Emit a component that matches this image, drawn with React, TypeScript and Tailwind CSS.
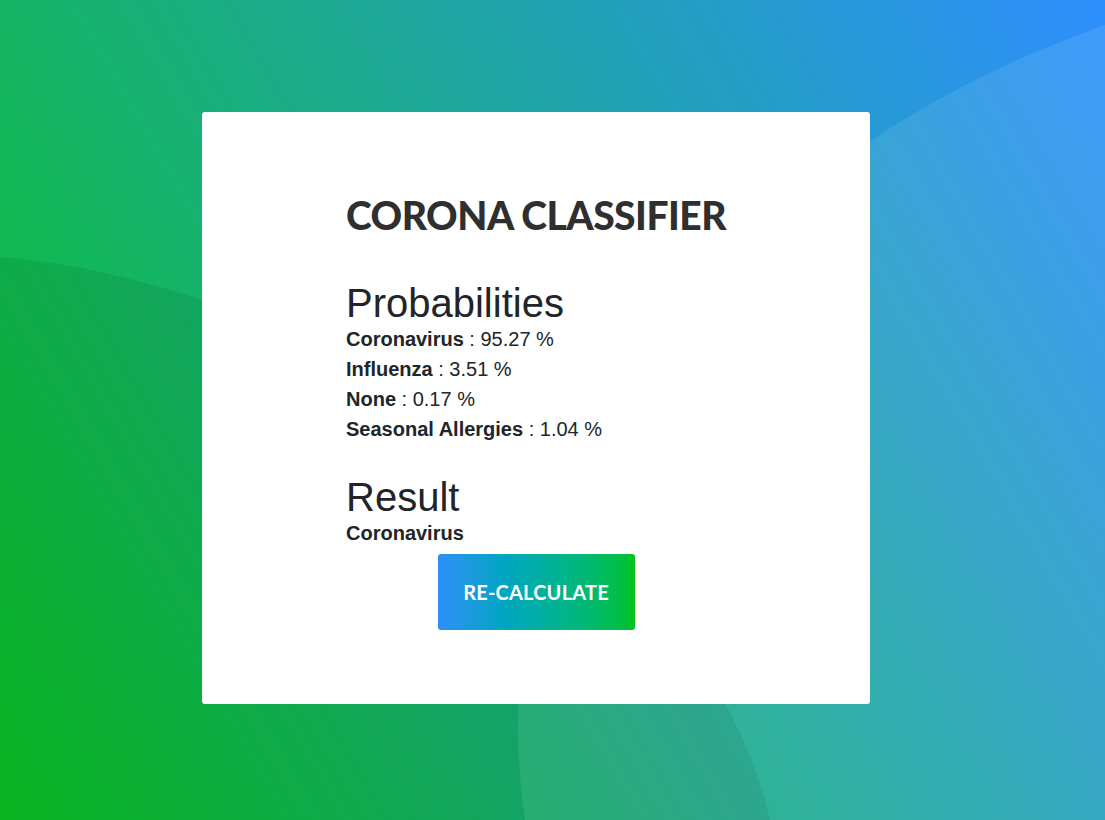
import React from "react";

const probabilities = [
  { label: "Coronavirus", value: "95.27" },
  { label: "Influenza", value: "3.51" },
  { label: "None", value: "0.17" },
  { label: "Seasonal Allergies", value: "1.04" },
];

function Backdrop() {
  return (
    <svg
      className="absolute inset-0 h-full w-full"
      viewBox="0 0 1105 820"
      preserveAspectRatio="none"
      aria-hidden="true"
    >
      {/* darker wave, bottom left */}
      <path d="M0 257 C300 280, 700 520, 770 820 L0 820 Z" fill="#000" fillOpacity="0.075" />
      {/* lighter wave, right side */}
      <path d="M1105 25 C750 150, 470 450, 525 820 L1105 820 Z" fill="#e6fff4" fillOpacity="0.1" />
    </svg>
  );
}

export default function App() {
  return (
    <div className="relative min-h-screen w-full overflow-hidden bg-[linear-gradient(60deg,#09c422,#2e8fff)] font-['Liberation_Sans',Arial,sans-serif]">
      <Backdrop />

      <div className="relative pl-[202px] pt-[112px]">
        <div className="flex h-[592px] w-[668px] justify-center rounded-[3px] bg-white pt-[80px]">
          <div className="flex w-[380px] flex-col">
            {/* Title */}
            <h1 className="whitespace-nowrap font-['Lato',sans-serif] text-[39px] font-black leading-[1.2] tracking-[-0.5px] text-[#2f2f2f]">
              CORONA CLASSIFIER
            </h1>

            {/* Probabilities */}
            <h2 className="mt-[43px] text-[40px] leading-[42px] text-[#212529]">Probabilities</h2>
            <div className="flex flex-col text-[20px] leading-[30px] text-[#212529]">
              {probabilities.map((p) => (
                <p key={p.label}>
                  <span className="font-bold">{p.label}</span> : {p.value} %
                </p>
              ))}
            </div>

            {/* Result */}
            <h2 className="mt-8 text-[40px] leading-[42px] text-[#212529]">Result</h2>
            <p className="text-[20px] font-bold leading-[30px] text-[#212529]">Coronavirus</p>

            <button className="mx-auto mt-1.5 flex h-[76px] w-[197px] items-center justify-center rounded-[3px] bg-gradient-to-r from-[#2c8ef8] to-[#00c21b] font-['Lato',sans-serif] text-[20px] font-bold tracking-[0.2px] text-white">
              RE-CALCULATE
            </button>
          </div>
        </div>
      </div>
    </div>
  );
}
